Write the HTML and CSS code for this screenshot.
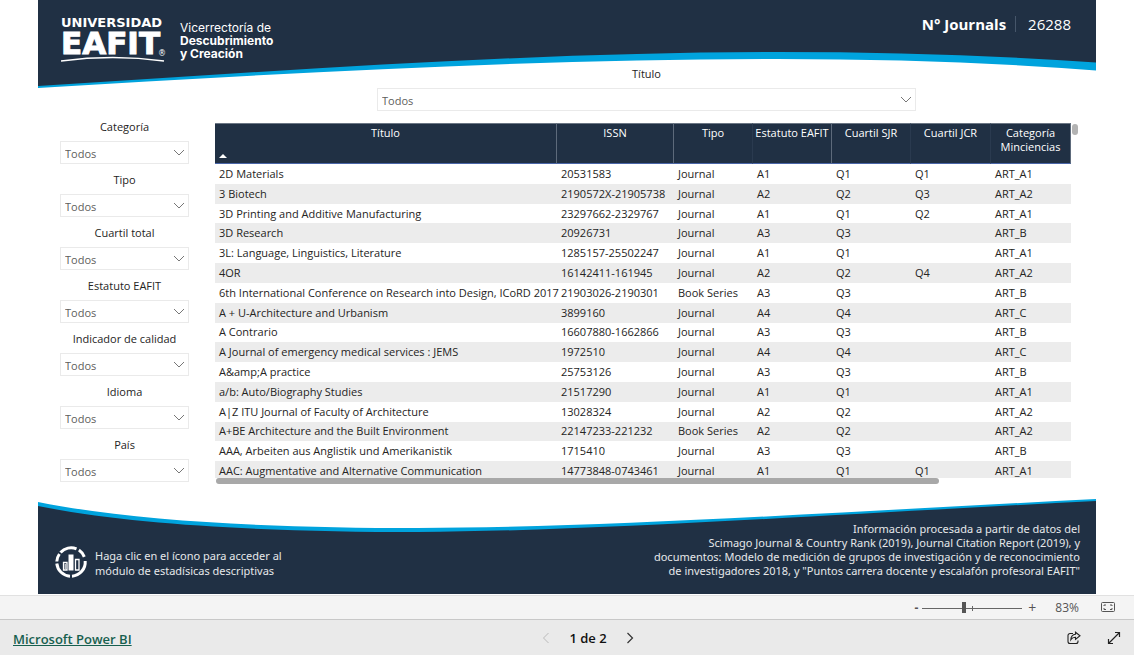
FILE: index.html
```html
<!DOCTYPE html>
<html lang="es">
<head>
<meta charset="utf-8">
<title>Journals - Universidad EAFIT</title>
<link rel="stylesheet" href="styles.css">
</head>
<body>
<main class="report">
  <svg class="wave wave-top" viewBox="0 0 1058 88" preserveAspectRatio="none" aria-hidden="true">
    <path fill="#00a3dd" d="M0 0H1058V70.5Q910 59 740 59C500 59 250 73 0 88Z"/>
    <path fill="#203044" d="M0 0H1058V62.5Q910 52 740 52C500 52 250 70 0 86Z"/>
  </svg>
  <svg class="wave wave-bottom" viewBox="0 0 1058 95" preserveAspectRatio="none" aria-hidden="true">
    <path fill="#00a3dd" d="M0 3C100 23 240 29 380 29C560 29 800 13 1058 0V95H0Z"/>
    <path fill="#203044" d="M0 7C100 27 240 33 380 33C560 32 800 15 1058 2V95H0Z"/>
  </svg>

  <header class="top">
    <div class="brand">
      <div class="logo">
        <span class="logo-small">UNIVERSIDAD</span>
        <span class="logo-big">EAFIT</span>
        <span class="logo-mark">®</span>
        <svg class="logo-line" viewBox="0 0 104 6" aria-hidden="true"><path d="M0 5Q52-2 103 5" fill="none" stroke="#fff" stroke-width="1.6"/></svg>
      </div>
      <div class="office"><span>Vicerrectoría de</span><b>Descubrimiento</b><b>y Creación</b></div>
    </div>
    <div class="count"><b>N° Journals</b><span class="count-value">26288</span></div>
  </header>

  <div class="content">
    <aside class="filters">
      <div class="slicer"><label for="f1">Categoría</label><div class="pick"><select id="f1"><option>Todos</option></select><svg viewBox="0 0 12 8"><path d="M1 1l5 5 5-5"/></svg></div></div>
      <div class="slicer"><label for="f2">Tipo</label><div class="pick"><select id="f2"><option>Todos</option></select><svg viewBox="0 0 12 8"><path d="M1 1l5 5 5-5"/></svg></div></div>
      <div class="slicer"><label for="f3">Cuartil total</label><div class="pick"><select id="f3"><option>Todos</option></select><svg viewBox="0 0 12 8"><path d="M1 1l5 5 5-5"/></svg></div></div>
      <div class="slicer"><label for="f4">Estatuto EAFIT</label><div class="pick"><select id="f4"><option>Todos</option></select><svg viewBox="0 0 12 8"><path d="M1 1l5 5 5-5"/></svg></div></div>
      <div class="slicer"><label for="f5">Indicador de calidad</label><div class="pick"><select id="f5"><option>Todos</option></select><svg viewBox="0 0 12 8"><path d="M1 1l5 5 5-5"/></svg></div></div>
      <div class="slicer"><label for="f6">Idioma</label><div class="pick"><select id="f6"><option>Todos</option></select><svg viewBox="0 0 12 8"><path d="M1 1l5 5 5-5"/></svg></div></div>
      <div class="slicer"><label for="f7">País</label><div class="pick"><select id="f7"><option>Todos</option></select><svg viewBox="0 0 12 8"><path d="M1 1l5 5 5-5"/></svg></div></div>
    </aside>

    <section class="data">
      <div class="slicer slicer-wide"><label for="f0">Título</label><div class="pick"><select id="f0"><option>Todos</option></select><svg viewBox="0 0 12 8"><path d="M1 1l5 5 5-5"/></svg></div></div>
      <div class="grid-row">
        <div class="grid-col">
          <div class="viewport">
            <table>
              <colgroup><col><col class="c-issn"><col class="c-mid"><col class="c-mid"><col class="c-mid"><col class="c-end"><col class="c-end"></colgroup>
              <thead><tr><th class="sorted">Título<svg class="sort" viewBox="0 0 8 4" aria-hidden="true"><path d="M0 4l4-4 4 4z" fill="#fff"/></svg></th><th>ISSN</th><th>Tipo</th><th class="nowrap">Estatuto EAFIT</th><th>Cuartil SJR</th><th>Cuartil JCR</th><th>Categoría Minciencias</th></tr></thead>
              <tbody>
                <tr><td>2D Materials</td><td>20531583</td><td>Journal</td><td>A1</td><td>Q1</td><td>Q1</td><td>ART_A1</td></tr>
                <tr><td>3 Biotech</td><td>2190572X-21905738</td><td>Journal</td><td>A2</td><td>Q2</td><td>Q3</td><td>ART_A2</td></tr>
                <tr><td>3D Printing and Additive Manufacturing</td><td>23297662-2329767</td><td>Journal</td><td>A1</td><td>Q1</td><td>Q2</td><td>ART_A1</td></tr>
                <tr><td>3D Research</td><td>20926731</td><td>Journal</td><td>A3</td><td>Q3</td><td></td><td>ART_B</td></tr>
                <tr><td>3L: Language, Linguistics, Literature</td><td>1285157-25502247</td><td>Journal</td><td>A1</td><td>Q1</td><td></td><td>ART_A1</td></tr>
                <tr><td>4OR</td><td>16142411-161945</td><td>Journal</td><td>A2</td><td>Q2</td><td>Q4</td><td>ART_A2</td></tr>
                <tr><td>6th International Conference on Research into Design, ICoRD 2017</td><td>21903026-2190301</td><td>Book Series</td><td>A3</td><td>Q3</td><td></td><td>ART_B</td></tr>
                <tr><td>A + U-Architecture and Urbanism</td><td>3899160</td><td>Journal</td><td>A4</td><td>Q4</td><td></td><td>ART_C</td></tr>
                <tr><td>A Contrario</td><td>16607880-1662866</td><td>Journal</td><td>A3</td><td>Q3</td><td></td><td>ART_B</td></tr>
                <tr><td>A Journal of emergency medical services : JEMS</td><td>1972510</td><td>Journal</td><td>A4</td><td>Q4</td><td></td><td>ART_C</td></tr>
                <tr><td>A&amp;amp;A practice</td><td>25753126</td><td>Journal</td><td>A3</td><td>Q3</td><td></td><td>ART_B</td></tr>
                <tr><td>a/b: Auto/Biography Studies</td><td>21517290</td><td>Journal</td><td>A1</td><td>Q1</td><td></td><td>ART_A1</td></tr>
                <tr><td>A|Z ITU Journal of Faculty of Architecture</td><td>13028324</td><td>Journal</td><td>A2</td><td>Q2</td><td></td><td>ART_A2</td></tr>
                <tr><td>A+BE Architecture and the Built Environment</td><td>22147233-221232</td><td>Book Series</td><td>A2</td><td>Q2</td><td></td><td>ART_A2</td></tr>
                <tr><td>AAA, Arbeiten aus Anglistik und Amerikanistik</td><td>1715410</td><td>Journal</td><td>A3</td><td>Q3</td><td></td><td>ART_B</td></tr>
                <tr><td>AAC: Augmentative and Alternative Communication</td><td>14773848-0743461</td><td>Journal</td><td>A1</td><td>Q1</td><td>Q1</td><td>ART_A1</td></tr>
              </tbody>
            </table>
          </div>
          <div class="thumb-x"></div>
        </div>
        <div class="thumb-y"></div>
      </div>
    </section>
  </div>

  <footer class="notes">
    <div class="stats">
      <button class="stats-button" type="button" aria-label="Estadísticas descriptivas">
        <svg viewBox="0 0 34 34" width="34" height="34">
          <g fill="none" stroke="#fff" stroke-width="3">
            <path d="M6.500 7.500A14.200 14.200 0 0 1 22.500 3.900"/>
            <path d="M24.900 5.100A14.200 14.200 0 0 1 30.300 11.900"/>
            <path d="M31.200 16A14.200 14.200 0 0 1 18 31.200"/>
            <path d="M16 31.200A14.200 14.200 0 0 1 2.800 18.500"/>
            <path d="M2.800 16.500A14.200 14.200 0 0 1 5.400 9"/>
          </g>
          <path d="M14.500 9.500h5v16h-5z" fill="#fff"/>
          <path d="M9.500 17.500h3.500v7.500H9.500zM21.500 14.500h3.500v10.500h-3.500z" fill="none" stroke="#fff" stroke-width="1.300"/>
          <path d="M11.200 19v5" stroke="#fff"/>
        </svg>
      </button>
      <p class="stats-text">Haga clic en el ícono para acceder al<br>módulo de estadísicas descriptivas</p>
    </div>
    <p class="source">Información procesada a partir de datos del<br>Scimago Journal &amp; Country Rank (2019), Journal Citation Report (2019), y<br>documentos: Modelo de medición de grupos de investigación y de reconocimiento<br>de investigadores 2018, y "Puntos carrera docente y escalafón profesoral EAFIT"</p>
  </footer>
</main>

<div class="zoombar">
  <button type="button" aria-label="Alejar">-</button>
  <input class="zoom" type="range" min="0" max="100" value="41" aria-label="Zoom">
  <button type="button" aria-label="Acercar">+</button>
  <span class="percent">83%</span>
  <button type="button" aria-label="Ajustar a la página"><svg width="14" height="11" viewBox="0 0 14 11" fill="none" stroke="#555"><rect x=".5" y=".5" width="13" height="9" rx="1"/><path d="M3 4V3h2M9 3h2v1M3 6v1.500h2M9 7.500h2V6"/></svg></button>
</div>
<nav class="pagebar">
  <a class="powerbi" href="#">Microsoft Power BI</a>
  <div class="pager">
    <button type="button" aria-label="Anterior" disabled><svg width="8" height="12" viewBox="0 0 8 12"><path d="M6.500 1l-5 5 5 5" fill="none" stroke="#bbb"/></svg></button>
    <span>1 de 2</span>
    <button type="button" aria-label="Siguiente"><svg width="8" height="12" viewBox="0 0 8 12"><path d="M1.500 1l5 5-5 5" fill="none" stroke="#333" stroke-width="1.200"/></svg></button>
  </div>
  <div class="actions">
    <button type="button" aria-label="Compartir"><svg width="14" height="14" viewBox="0 0 14 14" fill="none" stroke="#222" stroke-width="1.100"><path d="M6 2.500H3a2 2 0 0 0-2 2v6a2 2 0 0 0 2 2h6a2 2 0 0 0 2-2v-1"/><path d="M8.500 1.200l4.500 3.600-4.500 3.600V6.300C6.300 6.200 5 7 3.800 8.800 4 5.500 5.500 3.600 8.500 3.300z"/></svg></button>
    <button type="button" aria-label="Pantalla completa"><svg width="14" height="14" viewBox="0 0 14 14" fill="none" stroke="#222" stroke-width="1.200"><path d="M1.500 12.500l11-11M8 1.500h4.500V6M1.500 8v4.500H6"/></svg></button>
  </div>
</nav>
</body>
</html>
```
FILE: styles.css
```css
* { box-sizing: border-box; }
body {
  margin: 0;
  min-height: 100vh;
  display: flex;
  flex-direction: column;
  background: #fff;
  color: #252423;
  font: 11px/16px "Segoe UI", "Open Sans", sans-serif;
}
p { margin: 0; }
button {
  padding: 0;
  border: 0;
  background: none;
  color: inherit;
  font: inherit;
  display: flex;
  align-items: center;
  justify-content: center;
}
.report {
  position: relative;
  margin: 0 38px;
  min-height: 594px;
  display: flex;
  flex-direction: column;
}
.wave { position: absolute; left: 0; width: 100%; z-index: -1; }
.wave-top { top: 0; height: 88px; }
.wave-bottom { bottom: 0; height: 95px; }

.top {
  height: 66px;
  padding: 16px 25px 0 23px;
  display: flex;
  justify-content: space-between;
  align-items: flex-start;
  color: #fff;
}
.brand { display: flex; gap: 14px; }
.logo {
  position: relative;
  width: 105px;
  display: flex;
  flex-direction: column;
  font-family: "DejaVu Sans", sans-serif;
  font-weight: bold;
  white-space: nowrap;
}
.logo-small { font-size: 13px; line-height: 14px; }
.logo-big { font-size: 31px; line-height: 26px; -webkit-text-stroke: 1px #fff; }
.logo-mark { position: absolute; right: 0; top: 33px; font-size: 8px; line-height: 10px; font-weight: normal; }
.logo-line { width: 104px; height: 6px; }
.office { display: flex; flex-direction: column; padding-top: 5px; font: 12px/13px Inter, sans-serif; }
.count { display: flex; align-items: center; font-size: 15px; line-height: 16px; }
.count-value { margin-left: 9px; padding-left: 12px; border-left: 1px solid #46566a; }

.content {
  display: grid;
  grid-template-columns: 129px 1fr;
  gap: 26px;
  padding: 0 18px 0 22px;
}
.filters { display: flex; flex-direction: column; gap: 8px; padding-top: 53px; }
.slicer { display: flex; flex-direction: column; gap: 6px; }
.slicer label { text-align: center; line-height: 16px; }
.pick { display: grid; align-items: center; }
.pick > * { grid-area: 1 / 1; }
.pick select {
  width: 100%;
  height: 23px;
  padding: 2px 4px 0;
  appearance: none;
  border: 1px solid #eaeaea;
  border-radius: 0;
  background: #fff;
  color: #605e5c;
  font: inherit;
}
.pick svg {
  width: 12px;
  height: 8px;
  margin-right: 4px;
  justify-self: end;
  pointer-events: none;
  fill: none;
  stroke: #777;
}
.slicer-wide { width: 539px; max-width: 80%; margin: 0 0 12px 162px; }

.grid-row { display: flex; gap: 1px; }
.grid-col { flex: 1; min-width: 0; }
.viewport { height: 355px; overflow: hidden; }
table { width: 100%; height: 358px; border-collapse: separate; border-spacing: 0; table-layout: fixed; }
.c-issn { width: 117px; }
.c-mid { width: 79px; }
.c-end { width: 80px; }
th {
  height: 41px;
  padding: 2px 1px 0;
  vertical-align: top;
  background: #203044;
  border-top: 1px solid #6b7684;
  border-bottom: 1px solid #4a66a8;
  border-right: 1px solid #2a3a4f;
  color: #fff;
  font-weight: normal;
  line-height: 14px;
}
th:nth-child(1), th:nth-child(2), th:nth-child(4), th:nth-child(7) { border-right-color: #5d6a7b; }
.nowrap { white-space: nowrap; }
.sorted { position: relative; }
.sort { position: absolute; left: 4px; bottom: 5px; width: 8px; height: 4px; }
td { padding: 0 4px; line-height: 16px; white-space: nowrap; }
tbody tr:nth-child(even) { background: #ececec; }
.thumb-x { width: 723px; max-width: 85%; height: 6px; margin-left: 1px; border-radius: 3px; background: #a8a8a8; }
.thumb-y { width: 6px; height: 11px; margin-top: 1px; border-radius: 3px; background: #b3b3b3; }

.notes {
  flex: 1;
  display: flex;
  justify-content: space-between;
  align-items: flex-start;
  padding: 38px 16px 14px;
  color: #e6e8ea;
  font-family: "Segoe UI", "Noto Sans", sans-serif;
}
.stats { display: flex; align-items: center; gap: 7px; padding-top: 23px; }
.stats-text { padding-top: 1px; font-size: 11px; line-height: 15px; }
.source { text-align: right; font-size: 11px; line-height: 14px; }

.zoombar {
  height: 24px;
  margin-top: 1px;
  padding: 0 19px 0 0;
  display: flex;
  align-items: center;
  justify-content: flex-end;
  border-top: 1px solid #e1e1e1;
  background: #f4f4f4;
  color: #555;
  font-size: 12px;
}
.zoombar button:first-child { font-weight: bold; }
.zoombar button:nth-of-type(2) { font-size: 14px; }
.zoom {
  appearance: none;
  width: 100px;
  height: 12px;
  margin: 0 6px 0 4px;
  background:
    linear-gradient(#666, #666) 50px 4px / 1px 5px no-repeat,
    linear-gradient(#666, #666) 0 6px / 100% 1px no-repeat;
}
.zoom::-webkit-slider-thumb { appearance: none; width: 4px; height: 11px; background: #555; }
.percent { margin: 0 22px 0 19px; }
.pagebar {
  flex: 1;
  min-height: 36px;
  padding: 0 13px;
  display: grid;
  grid-template-columns: 1fr auto 1fr;
  align-items: center;
  border-top: 1px solid #c8c8c8;
  background: #eaeaea;
}
.powerbi { color: #17604f; font-size: 13px; font-weight: 600; line-height: 18px; padding-top: 2px; }
.pager { display: flex; align-items: center; gap: 19px; margin-left: 42px; color: #111; font-size: 13px; font-weight: 600; }
.actions { display: flex; justify-content: flex-end; gap: 26px; }
```
